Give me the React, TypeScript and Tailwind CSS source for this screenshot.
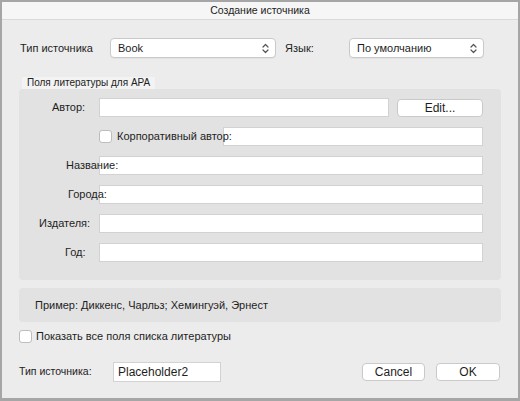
import React from "react";

function Chevrons() {
  return (
    <svg width="7" height="11" viewBox="0 0 7 11" fill="none" stroke="#555" strokeWidth="1.2" strokeLinecap="round" strokeLinejoin="round">
      <path d="M1 4 L3.5 1.5 L6 4" />
      <path d="M1 7 L3.5 9.5 L6 7" />
    </svg>
  );
}

function Select({ value, w }: { value: string; w: string }) {
  return (
    <div className={`${w} h-[20px] bg-white border border-[#c9c9c9] rounded-[4px] flex items-center justify-between pl-[7px] pr-[6px] shadow-[0_1px_0_rgba(0,0,0,0.04)]`}>
      <span className="text-[11px] text-[#1e1e1e]">{value}</span>
      <Chevrons />
    </div>
  );
}

function Input({ w, h = "h-[19px]" }: { w: string; h?: string }) {
  return <div className={`${w} ${h} bg-white border border-[#d2d2d2]`} />;
}

function Checkbox() {
  return <div className="w-[13px] h-[13px] bg-white border border-[#bdbdbd] rounded-[3px]" />;
}

function Button({ label, w }: { label: string; w: string }) {
  return (
    <div className={`${w} h-[18px] bg-white border border-[#c9c9c9] rounded-[4px] flex items-center justify-center text-[12px] text-[#1e1e1e]`}>
      {label}
    </div>
  );
}

function FieldRow({ label, pl }: { label: string; pl: string }) {
  return (
    <div className="flex items-center h-[19px]">
      <div className={`w-[80px] shrink-0 ${pl} relative z-10 whitespace-nowrap text-[11px] text-[#1e1e1e]`}>{label}</div>
      <Input w="w-[384px]" />
    </div>
  );
}

export default function App() {
  return (
    <div
      className="w-[520px] h-[401px] border-x-2 border-t-2 border-b-[3px] border-[#a6a6a6] bg-[#ececec] flex flex-col text-[#1e1e1e]"
      style={{ fontFamily: '"Liberation Sans", Arial, sans-serif' }}
    >
      <div className="h-[18px] bg-[#f6f6f6] border-b border-[#d9d9d9] flex items-center justify-center text-[10.5px] text-[#222]">
        Создание источника
      </div>
      <div className="flex flex-col px-[17px]">
        {/* Row 1 */}
        <div className="flex items-center mt-[18px] h-[20px]">
          <div className="w-[91px] pl-px text-[11px]">Тип источника</div>
          <Select value="Book" w="w-[166px]" />
          <div className="w-[73px] pl-[9px] text-[11px]">Язык:</div>
          <Select value="По умолчанию" w="w-[135px]" />
        </div>

        {/* Group */}
        <div className="mt-[19px] flex">
          <div className="ml-[3px] h-[12px] px-[5px] bg-[#f3f3f3] text-[10px] leading-[12px] text-[#222]">
            Поля литературы для APA
          </div>
        </div>
        <div className="w-[482px] bg-[#e2e2e2] rounded-[4px] pt-[9px] pb-[18px] pr-[18px] flex flex-col gap-[10px]">
          <div className="flex items-center h-[19px]">
            <div className="w-[80px] shrink-0 pl-[33px] text-[11px]">Автор:</div>
            <Input w="w-[290px]" />
            <div className="ml-[8px]">
              <Button label="Edit..." w="w-[86px]" />
            </div>
          </div>
          <div className="flex items-center h-[19px]">
            <div className="w-[80px] shrink-0" />
            <Checkbox />
            <div className="ml-[5px] w-[106px] shrink-0 relative z-10 whitespace-nowrap text-[11px]">Корпоративный автор:</div>
            <Input w="w-[260px]" />
          </div>
          <FieldRow label="Название:" pl="pl-[47px]" />
          <FieldRow label="Города:" pl="pl-[49px]" />
          <FieldRow label="Издателя:" pl="pl-[20px]" />
          <FieldRow label="Год:" pl="pl-[46px]" />
        </div>

        {/* Example */}
        <div className="mt-[8px] w-[482px] h-[34px] bg-[#e2e2e2] rounded-[4px] flex items-center pl-[16px] text-[11px]">
          Пример: Диккенс, Чарльз; Хемингуэй, Эрнест
        </div>

        {/* Show all */}
        <div className="mt-[8px] flex items-center h-[13px]">
          <Checkbox />
          <span className="ml-[4px] text-[11px]">Показать все поля списка литературы</span>
        </div>

        {/* Bottom */}
        <div className="mt-[19px] flex items-center h-[20px]">
          <div className="w-[94px] shrink-0 text-[10.5px] text-[#222]">Тип источника:</div>
          <div className="w-[108px] h-[20px] bg-white border border-[#d2d2d2] flex items-center pl-[4px] text-[12px]">
            Placeholder2
          </div>
          <div className="flex-1" />
          <div className="flex gap-[11px] mr-[1px] -mt-[1px]">
            <Button label="Cancel" w="w-[63px]" />
            <Button label="OK" w="w-[64px]" />
          </div>
        </div>
      </div>
    </div>
  );
}
